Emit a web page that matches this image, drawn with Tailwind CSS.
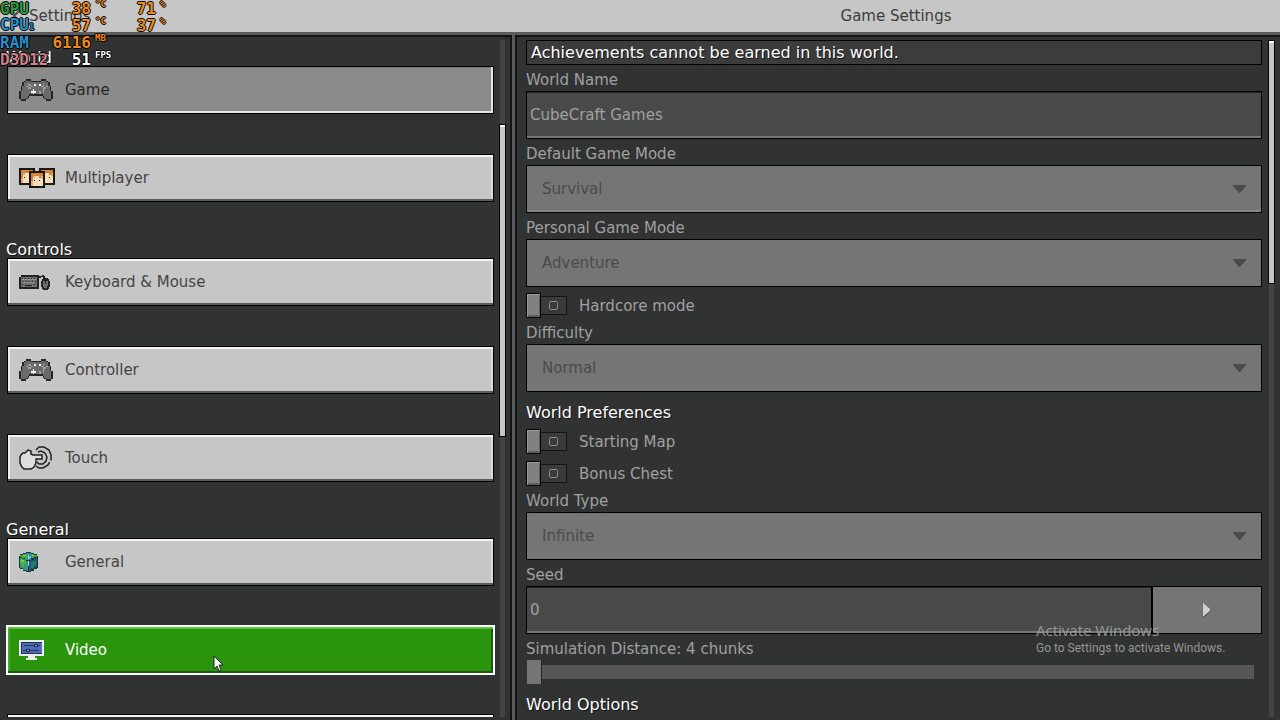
<!DOCTYPE html>
<html lang="en">
<head>
<meta charset="utf-8">
<meta name="viewport" content="width=device-width, initial-scale=1">
<title>Game Settings</title>
<script src="https://cdn.jsdelivr.net/npm/@tailwindcss/browser@4"></script>
</head>
<body class="relative flex h-screen flex-col overflow-hidden bg-[#313332] font-['DejaVu_Sans',sans-serif] text-[15px] leading-4 text-[#a0a0a0]">

<header class="flex h-8 shrink-0 items-center bg-[#c6c6c6] text-[#3c3c3c]">
  <div class="flex w-2/5 items-center gap-2 pl-3">
    <button type="button" aria-label="Back" class="flex w-[9px] justify-center">
      <svg width="8" height="14" viewBox="0 0 8 14" fill="none" stroke="#4c4c4c" stroke-width="2"><path d="M7 1 1 7l6 6"/></svg>
    </button>
    <span>Settings</span>
  </div>
  <h1 class="flex-1 text-center">Game Settings</h1>
</header>

<main class="flex min-h-0 flex-1 border-t-3 border-[#5a5b5c]">
  <nav aria-label="Settings sections" class="flex w-2/5 shrink-0 border-t-2 border-r-2 border-[#141414] pt-[3px] pr-1 pb-[3px]">
    <div class="min-w-0 flex-1 overflow-hidden pt-[10px] pr-[5px] pl-[6px]">
      <section class="pb-10">
        <h2 class="h-4 text-base leading-4 text-white [text-shadow:1px_1px_0_#111]">World</h2>
        <div class="flex flex-col gap-10 pl-px">
          <button type="button" class="flex h-12 items-center border border-black bg-[#8b8b8b] pl-[11px] text-[#262626] shadow-[inset_-2px_-2px_0_#e6e6e6,inset_1px_1px_0_#777]">
            <span class="w-[46px]"><svg data-sprite="controller" width="34" height="22" viewBox="0 0 20 13" shape-rendering="crispEdges"></svg></span>Game
          </button>
          <button type="button" class="flex h-12 items-center border border-black bg-[#c6c6c6] pl-[11px] text-[#444] shadow-[inset_0_2px_0_#f4f4f4,inset_0_-2px_0_#5a5b5c,inset_2px_0_0_#ededed,inset_-2px_0_0_#dcdcdc]">
            <span class="w-[46px]">
              <svg width="36" height="20" viewBox="0 0 36 20" shape-rendering="crispEdges">
                <g id="face"><path fill="#1c1712" d="M0 0h16v17H0z"/><path fill="#f6dfbc" d="M2 2h12v13H2z"/><path fill="#d4853b" d="M2 2h12v3h-2v2h-2V5H6v2H4v3H2z"/><path fill="#e6ad6d" d="M4 5h2v2H4zM12 5h2v3h-2zM2 10h2v5H2z"/><path fill="#2b1d14" d="M5 9h1v1H5zM10 9h1v1h-1z"/></g>
                <use href="#face" x="20"/><use href="#face" x="10" y="3"/>
              </svg>
            </span>Multiplayer
          </button>
        </div>
      </section>
      <section class="pb-10">
        <h2 class="h-4 text-base leading-4 text-white [text-shadow:1px_1px_0_#111]">Controls</h2>
        <div class="flex flex-col gap-10 pl-px">
          <button type="button" class="flex h-12 items-center border border-black bg-[#c6c6c6] pl-[11px] text-[#444] shadow-[inset_0_2px_0_#f4f4f4,inset_0_-2px_0_#5a5b5c,inset_2px_0_0_#ededed,inset_-2px_0_0_#dcdcdc]">
            <span class="w-[46px]">
              <svg width="31" height="16" viewBox="0 0 31 16" shape-rendering="crispEdges">
                <path fill="#222" d="M2 1h18v14H0V3h2zM20 2h3V1h2v1h1v2h3v1h1v2h1v6h-1v2h-1v1h-5v-1h-1v-2h-1V7h1V5h1V3h-2v1h-2z"/>
                <path fill="#707070" d="M2 3h16v10H2zM24 7h5v5h-1v2h-3v-1h-1z"/>
                <path fill="#222" d="M26 5h1v5h-1zM3 4h1v1H3zM6 4h1v1H6zM9 4h1v1H9zM12 4h1v1h-1zM15 4h1v1h-1zM4 7h1v1H4zM7 7h1v1H7zM10 7h1v1h-1zM13 7h1v1h-1zM16 7h1v1h-1zM3 10h1v1H3zM6 11h7v1H6zM15 10h1v1h-1z"/>
                <path fill="#a2a2a2" d="M3 5h2v1H3zM6 5h2v1H6zM9 5h2v1H9zM12 5h2v1h-2zM15 5h2v1h-2zM4 8h2v1H4zM7 8h2v1H7zM10 8h2v1h-2zM13 8h2v1h-2z"/>
              </svg>
            </span>Keyboard &amp; Mouse
          </button>
          <button type="button" class="flex h-12 items-center border border-black bg-[#c6c6c6] pl-[11px] text-[#444] shadow-[inset_0_2px_0_#f4f4f4,inset_0_-2px_0_#5a5b5c,inset_2px_0_0_#ededed,inset_-2px_0_0_#dcdcdc]">
            <span class="w-[46px]"><svg data-sprite="controller" width="34" height="22" viewBox="0 0 20 13" shape-rendering="crispEdges"></svg></span>Controller
          </button>
          <button type="button" class="flex h-12 items-center border border-black bg-[#c6c6c6] pl-[11px] text-[#444] shadow-[inset_0_2px_0_#f4f4f4,inset_0_-2px_0_#5a5b5c,inset_2px_0_0_#ededed,inset_-2px_0_0_#dcdcdc]">
            <span class="w-[46px]">
              <svg width="33" height="24" viewBox="0 0 33 24" fill="none" stroke="#222" stroke-width="1.500">
                <path fill="#dedede" d="M4 7h2l3-3 3 1v3l2 1h9v4h-6v4l-2 4-3 2H5l-2-2-2-4v-6l1-2z"/>
                <path d="M17 4l3-3h5l5 3 2 5v5l-3 5-5 3h-4l-3-2" stroke-dasharray="26 2 30"/>
                <path d="M19 6l3-1 4 2 2 4-1 4-3 3h-4l-2-2"/>
              </svg>
            </span>Touch
          </button>
        </div>
      </section>
      <section>
        <h2 class="h-4 text-base leading-4 text-white [text-shadow:1px_1px_0_#111]">General</h2>
        <div class="flex flex-col gap-10 pl-px">
          <button type="button" class="flex h-12 items-center border border-black bg-[#c6c6c6] pl-[11px] text-[#444] shadow-[inset_0_2px_0_#f4f4f4,inset_0_-2px_0_#5a5b5c,inset_2px_0_0_#ededed,inset_-2px_0_0_#dcdcdc]">
            <span class="w-[46px]">
              <svg width="19" height="20" viewBox="0 0 19 20" shape-rendering="crispEdges">
                <path fill="#18343f" d="M7 0h5v1h3v1h3v2h1v12h-1v1h-3v2h-3v1H7v-1H4v-2H1v-1H0V4h1V2h3V1h3z"/>
                <path fill="#2f8fb0" d="M7 1h5v1h3v1h3v2h-3v1h-3v2H7V6H4V5H1V3h3V2h3z"/>
                <path fill="#49a83c" d="M4 2h4v2h3v2H8v2H6V6H3V5H1V3h3zM12 2h3v1h3v2h-3v1h-2V4h-1z"/>
                <path fill="#6fd65c" d="M4 3h3v1H4zM2 8h3v2H2zM13 3h2v1h-2z"/>
                <path fill="#35967a" d="M1 6h3v1h3v2h2v10H7v-1H4v-2H1z"/><path fill="#49b045" d="M1 7h3v1h3v4H5v3H3v-3H1z"/><path fill="#6fd65c" d="M2 8h3v2H2z"/>
                <path fill="#1f5680" d="M18 6v9h-3v2h-3v2h-2V9h2V8h3V6z"/><path fill="#2b7d55" d="M12 10h3V9h2v4h-2v3h-3z"/>
                <path fill="#8fd9e8" d="M9 3h1v4H9zM9 9h1v5H9zM10 5h2v1h-2z"/>
              </svg>
            </span>General
          </button>
          <button type="button" class="flex h-12 items-center bg-[#2a940c] pl-3 text-white outline-2 -outline-offset-1 outline-white shadow-[inset_0_3px_0_#5bc23c,inset_0_-3px_0_#1d5710,inset_3px_0_0_#43ad28,inset_-3px_0_0_#1d5710]">
            <span class="w-[46px]">
              <svg width="25" height="20" viewBox="0 0 25 20" shape-rendering="crispEdges">
                <path fill="#e9eef2" d="M0 0h25v16h-9v2h2v2H7v-2h2v-2H0z"/><path fill="#27304b" d="M2 2h21v12H2z"/><path fill="#4b6dba" d="M3 3h20v10H3z"/>
                <path fill="#26355f" d="M5 5h10v1H5zM18 5h3v1h-3zM4 10h3v1H4zM11 10h9v1h-9z"/><path fill="#222b49" d="M15 4h4v3h-4zM7 9h4v3H7z"/><path fill="#b0b5bf" d="M16 5h2v1h-2zM8 10h2v1H8z"/>
              </svg>
            </span>Video
          </button>
          <button type="button" aria-label="More" class="h-12 border border-black bg-[#c6c6c6] shadow-[inset_0_2px_0_#f4f4f4,inset_0_-2px_0_#5a5b5c]"></button>
        </div>
      </section>
    </div>
    <div class="flex w-[7px] flex-col" aria-hidden="true">
      <div class="mx-px h-[84px] shrink-0 bg-[#434444]"></div>
      <div class="h-[313px] shrink-0 border border-black bg-[#c6c6c6] shadow-[inset_0_2px_0_#fff]"></div>
      <div class="mx-px flex-1 bg-[#434444]"></div>
    </div>
  </nav>
  <div class="w-[3px] shrink-0 bg-[#5a5b5c]"></div>
  <form class="flex min-w-0 flex-1 border-t-2 border-l-2 border-[#141414] pt-[3px] pr-[5px] pb-[3px]">
    <div class="min-w-0 flex-1 overflow-hidden pr-[6px] pl-[9px]">
      <p class="flex h-[25px] items-center border border-black bg-[#3c3c3c] pl-1 text-base leading-4 text-white [text-shadow:1px_1px_0_#111]">Achievements cannot be earned in this world.</p>

      <label for="world" class="flex h-[26px] items-center pt-1">World Name</label>
      <input id="world" type="text" disabled value="CubeCraft Games" class="block h-12 w-full border border-black bg-[#484a49] pl-[3px] text-[#a0a0a0] shadow-[inset_0_1px_0_#252626,inset_0_-2px_0_#777]">

      <label for="defmode" class="flex h-[26px] items-center pt-1">Default Game Mode</label>
      <div class="relative">
        <select id="defmode" disabled class="block h-12 w-full appearance-none border border-black bg-[#757575] pl-[15px] text-[#4b4b4b] opacity-100 shadow-[inset_0_-2px_0_#858886]"><option>Survival</option></select>
        <svg class="pointer-events-none absolute top-5 right-4" width="13" height="8" viewBox="0 0 13 8"><path fill="#4b4b4b" d="M0 0h13v1L7 8H6L0 1z"/></svg>
      </div>

      <label for="permode" class="flex h-[26px] items-center pt-1">Personal Game Mode</label>
      <div class="relative">
        <select id="permode" disabled class="block h-12 w-full appearance-none border border-black bg-[#757575] pl-[15px] text-[#4b4b4b] opacity-100"><option>Adventure</option></select>
        <svg class="pointer-events-none absolute top-5 right-4" width="13" height="8" viewBox="0 0 13 8"><path fill="#4b4b4b" d="M0 0h13v1L7 8H6L0 1z"/></svg>
      </div>

      <div class="pt-[6px]">
        <label class="relative flex h-[25px] items-center">
          <input type="checkbox" disabled class="peer sr-only">
          <span class="h-[25px] w-[15px] border border-black bg-[#818181] shadow-[inset_1px_1px_0_#9b9b9b,inset_-1px_-2px_0_#606060]"></span>
          <span class="flex h-[19px] w-[26px] items-center justify-center border border-l-0 border-[#141414] bg-[#393b3a]"><svg width="11" height="11" viewBox="0 0 11 11" fill="none" stroke="#8b8b8b"><path d="M2 1.500h7M2 9.500h7M1.500 2v7M9.500 2v7"/></svg></span>
          <span class="pl-3">Hardcore mode</span>
        </label>
      </div>

      <label for="difficulty" class="flex h-[26px] items-center pt-1">Difficulty</label>
      <div class="relative">
        <select id="difficulty" disabled class="block h-12 w-full appearance-none border border-black bg-[#757575] pl-[15px] text-[#4b4b4b] opacity-100"><option>Normal</option></select>
        <svg class="pointer-events-none absolute top-5 right-4" width="13" height="8" viewBox="0 0 13 8"><path fill="#4b4b4b" d="M0 0h13v1L7 8H6L0 1z"/></svg>
      </div>

      <h2 class="flex h-[31px] items-center pt-[10px] text-base leading-4 text-white [text-shadow:1px_1px_0_#111]">World Preferences</h2>
      <div class="flex flex-col gap-[7px] pt-[6px]">
        <label class="relative flex h-[25px] items-center">
          <input type="checkbox" disabled class="peer sr-only">
          <span class="h-[25px] w-[15px] border border-black bg-[#818181] shadow-[inset_1px_1px_0_#9b9b9b,inset_-1px_-2px_0_#606060]"></span>
          <span class="flex h-[19px] w-[26px] items-center justify-center border border-l-0 border-[#141414] bg-[#393b3a]"><svg width="11" height="11" viewBox="0 0 11 11" fill="none" stroke="#8b8b8b"><path d="M2 1.500h7M2 9.500h7M1.500 2v7M9.500 2v7"/></svg></span>
          <span class="pl-3">Starting Map</span>
        </label>
        <label class="relative flex h-[25px] items-center">
          <input type="checkbox" disabled class="peer sr-only">
          <span class="h-[25px] w-[15px] border border-black bg-[#818181] shadow-[inset_1px_1px_0_#9b9b9b,inset_-1px_-2px_0_#606060]"></span>
          <span class="flex h-[19px] w-[26px] items-center justify-center border border-l-0 border-[#141414] bg-[#393b3a]"><svg width="11" height="11" viewBox="0 0 11 11" fill="none" stroke="#8b8b8b"><path d="M2 1.500h7M2 9.500h7M1.500 2v7M9.500 2v7"/></svg></span>
          <span class="pl-3">Bonus Chest</span>
        </label>
      </div>

      <label for="wtype" class="flex h-[26px] items-center pt-1">World Type</label>
      <div class="relative">
        <select id="wtype" disabled class="block h-12 w-full appearance-none border border-black bg-[#757575] pl-[15px] text-[#4b4b4b] opacity-100"><option>Infinite</option></select>
        <svg class="pointer-events-none absolute top-5 right-4" width="13" height="8" viewBox="0 0 13 8"><path fill="#4b4b4b" d="M0 0h13v1L7 8H6L0 1z"/></svg>
      </div>

      <label for="seed" class="flex h-[26px] items-center pt-1">Seed</label>
      <div class="flex">
        <input id="seed" type="text" disabled value="0" class="h-12 min-w-0 flex-1 border border-black bg-[#484a49] pl-[3px] text-[#a0a0a0] shadow-[inset_0_1px_0_#252626,inset_0_-2px_0_#777]">
        <button type="button" disabled aria-label="Pick a seed" class="flex h-12 w-[110px] items-center justify-center border border-black bg-[#757575]">
          <svg width="8" height="14" viewBox="0 0 8 14"><path fill="#333" d="M1 14V2l7 6z"/><path fill="#cfcfcf" d="M0 0l7 6v2l-6 5H0z"/></svg>
        </button>
      </div>

      <label for="sim" class="flex h-[26px] items-center pt-1">Simulation Distance: 4 chunks</label>
      <input id="sim" type="range" min="4" max="12" value="4" disabled class="block h-6 w-full appearance-none border-r-8 border-l border-transparent [background:linear-gradient(#565656,#565656)_0_center/100%_14px_no-repeat_padding-box] [&::-webkit-slider-thumb]:h-6 [&::-webkit-slider-thumb]:w-[15px] [&::-webkit-slider-thumb]:appearance-none [&::-webkit-slider-thumb]:border-r [&::-webkit-slider-thumb]:border-[#222] [&::-webkit-slider-thumb]:bg-[#757575]">

      <h2 class="flex h-[31px] items-center pt-[10px] text-base leading-4 text-white [text-shadow:1px_1px_0_#111]">World Options</h2>
    </div>
    <div class="flex w-[7px] flex-col" aria-hidden="true">
      <div class="h-[244px] border border-black bg-[#c6c6c6] shadow-[inset_0_2px_0_#fff]"></div>
      <div class="mx-px flex-1 bg-[#434444]"></div>
    </div>
  </form>
</main>

<!-- Hardware monitor overlay -->
<div class="pointer-events-none absolute top-0 left-0 grid w-[180px] grid-cols-[46px_45px_19px_46px_1fr] auto-rows-[17px] items-center font-['DejaVu_Sans_Mono',monospace] text-base leading-[19px] font-bold text-[#ec8a1e] [text-shadow:1px_0_#000,-1px_0_#000,0_1px_#000,0_-1px_#000]">
  <span class="text-[#2d9a40]">GPU</span><span class="text-right">38</span><sup class="pl-1 text-[9px]">°C</sup><span class="text-right">71</span><sup class="pl-1 text-[9px]">%</sup>
  <span class="text-[#2a8fc8]">CPU<small class="text-[9px]">1</small></span><span class="text-right">57</span><sup class="pl-1 text-[9px]">°C</sup><span class="text-right">37</span><sup class="pl-1 text-[9px]">%</sup>
  <span class="text-[#2a8fc8]">RAM</span><span class="text-right">6116</span><sup class="pl-1 text-[9px]">MB</sup><span></span><span></span>
  <span class="text-[#cf8088]">D3D12</span><span class="text-right text-white">51</span><sup class="pl-1 text-[9px] text-white">FPS</sup><span></span><span></span>
</div>

<!-- Activation watermark -->
<div class="pointer-events-none absolute right-[55px] bottom-16 w-[189px] whitespace-nowrap text-[#a3a3a3]/90">
  <p class="font-['Open_Sans',sans-serif] text-[15px] leading-5">Activate Windows</p>
  <p class="font-['Roboto',sans-serif] text-[12px] leading-4">Go to Settings to activate Windows.</p>
</div>

<!-- Mouse pointer -->
<svg class="pointer-events-none absolute top-[655px] left-[213px]" width="12" height="18" viewBox="0 0 12 18"><path fill="#fff" stroke="#222" stroke-width="1" d="M1 1v13l3-3 2 5 2-1-2-5h4z"/></svg>

<script>
  // Pixel map of the game controller; one character is one square.
  const rows = [
    "....kkk......kkk....",
    "...kgggkkkkkkgggk...",
    "..kggggggggggggggk..",
    "..kggllggwggwglggk..",
    ".kgglgglggggglgglgk.",
    ".kgggllgggggggllggk.",
    ".kggggggwggggglgggk.",
    "kggggggwwwgglglggggk",
    "kgggggggwggglggggggk",
    "kgggggkkkkkkkkgggggk",
    "kggggk........kggggk",
    "kgggk..........kgggk",
    ".kkk............kkk."
  ];
  const ink = { k: "#262626", g: "#6b6b6b", l: "#a0a0a0", w: "#f4f4f4" };
  const cells = rows.flatMap((row, y) => [...row].map((c, x) =>
    ink[c] ? `<rect x="${x}" y="${y}" width="1" height="1" fill="${ink[c]}"/>` : "")).join("");
  document.querySelectorAll('[data-sprite="controller"]').forEach(s => { s.innerHTML = cells; });
</script>
</body>
</html>
